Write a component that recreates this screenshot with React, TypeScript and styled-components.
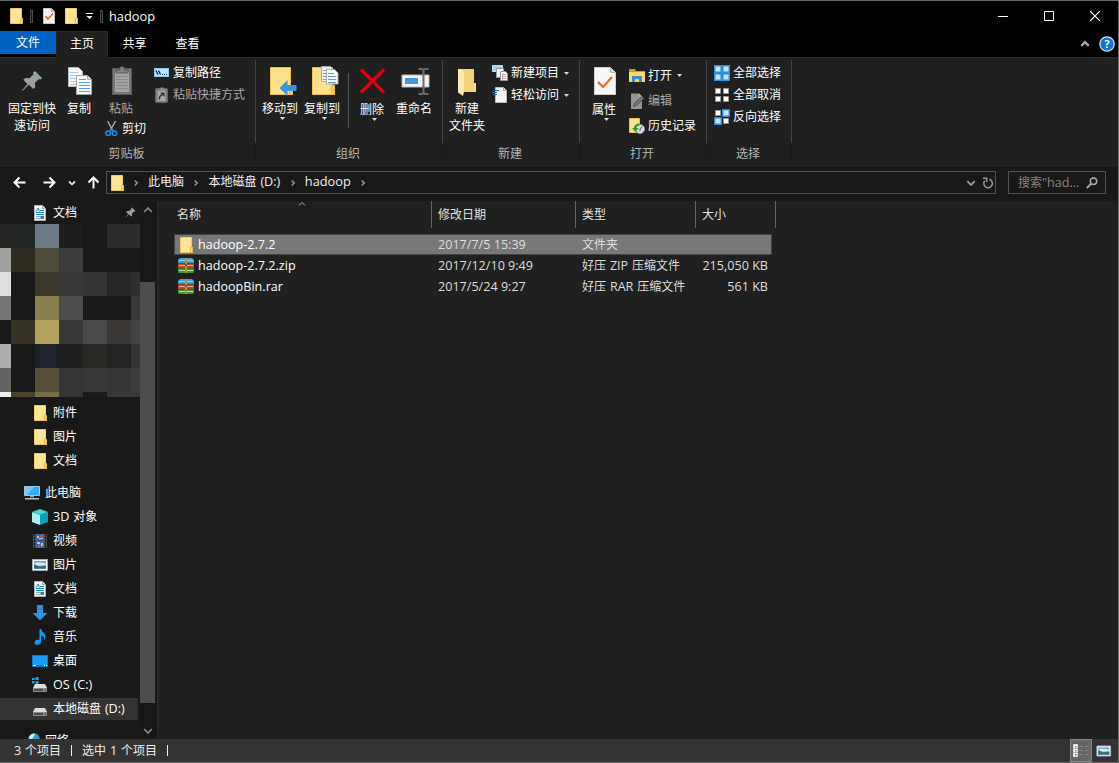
import React from "react";
import styled, { createGlobalStyle } from "styled-components";

const Global = createGlobalStyle`
  * { box-sizing: border-box; }
  body { margin: 0; background: #202020; }
  svg { display: block; flex: none; }
`;

const Window = styled.div`
  width: 1119px;
  height: 763px;
  display: flex;
  flex-direction: column;
  background: #202020;
  border: solid #6b6b6b;
  border-width: 1px 1px 1px 0;
  overflow: hidden;
  color: #fff;
  font-family: "Open Sans", "Noto Sans CJK SC", sans-serif;
  font-size: 12px;
  line-height: 17px;
  white-space: nowrap;
  cursor: default;
`;

const Latin = styled.span<{ $size?: number }>`
  font-size: ${(p) => p.$size ?? 12.6}px;
`;

const MixedText = styled.span<{ $lift?: number }>`
  padding-bottom: ${(p) => (p.$lift ?? 0) * 2}px;
  word-spacing: 0.6px;
  white-space: pre;
`;

/* ---------- title bar ---------- */

const TitleBar = styled.header`
  height: 30px;
  flex: none;
  display: flex;
  align-items: center;
  background: #000;
  padding-left: 8px;
`;

const QuickAccess = styled.div`
  display: flex;
  align-items: center;
  height: 30px;
`;

const QuickItem = styled.div<{ $gap: number }>`
  margin-left: ${(p) => p.$gap}px;
`;

const QuickDivider = styled.div<{ $gap: number }>`
  width: 3px;
  height: 13px;
  margin-left: ${(p) => p.$gap}px;
  border: 1px solid #4a4a4a;
  background: #161616;
`;

const WindowTitle = styled.h1`
  flex: 1;
  margin: 0 0 0 6px;
  font-weight: 400;
  font-size: 12.8px;
  line-height: 30px;
`;

const Caption = styled.div`
  width: 46px;
  height: 30px;
  display: flex;
  align-items: center;
  justify-content: center;
`;

/* ---------- tabs ---------- */

const TabBar = styled.nav`
  height: 27px;
  flex: none;
  display: flex;
  background: #000;
  border-bottom: 1px solid #2b2b2b;
`;

const FileTab = styled.div`
  width: 56px;
  height: 23px;
  line-height: 24px;
  background: #0063c4;
  text-align: center;
`;

const Tab = styled.div<{ $active?: boolean }>`
  width: ${(p) => (p.$active ? 52 : 53)}px;
  height: 27px;
  line-height: 24px;
  text-align: center;
  background: ${(p) => (p.$active ? "#202020" : "transparent")};
  border: solid ${(p) => (p.$active ? "#2b2b2b" : "transparent")};
  border-width: 1px 1px 0 1px;
`;

const TabTools = styled.div`
  margin-left: auto;
  display: flex;
  align-items: center;
  gap: 9px;
  padding-right: 3px;
  height: 26px;
`;

/* ---------- ribbon ---------- */

const Ribbon = styled.section`
  height: 108px;
  flex: none;
  display: flex;
  background: #202020;
  border-bottom: 1px solid #2b2b2b;
`;

const Group = styled.div<{ $width: number }>`
  width: ${(p) => p.$width}px;
  display: flex;
  flex-direction: column;
  background: linear-gradient(#444, #444) right 0 top 2px / 1px 83px no-repeat,
    linear-gradient(#1a1a1a, #1a1a1a) right 0 top 85px / 1px 18px no-repeat;
`;

const GroupBody = styled.div<{ $left?: number }>`
  height: 87px;
  display: flex;
  padding-left: ${(p) => p.$left ?? 0}px;
`;

const GroupName = styled.div`
  color: #b4b4b4;
  text-align: center;
  padding-right: 3px;
`;

const BigButton = styled.div<{ $width: number; $dim?: boolean }>`
  width: ${(p) => p.$width}px;
  display: flex;
  flex-direction: column;
  align-items: center;
  padding-top: 8px;
  text-align: center;
  color: ${(p) => (p.$dim ? "#a9a9a9" : "#fff")};
`;

const BigIcon = styled.div<{ $shift?: number }>`
  height: 34px;
  margin-left: ${(p) => (p.$shift ?? 0) * 2}px;
`;

const BigLabel = styled.div<{ $down?: boolean }>`
  height: 17px;
  margin-top: ${(p) => (p.$down ? 1 : 0)}px;
`;

const BigCaret = styled.div`
  margin-left: 5px;
`;

const Stack = styled.div`
  display: flex;
  flex-direction: column;
`;

const SmallColumn = styled.div<{ $left: number; $top: number; $row: number }>`
  display: grid;
  grid-auto-rows: ${(p) => p.$row}px;
  margin-left: ${(p) => p.$left}px;
  padding-top: ${(p) => p.$top}px;
  align-content: start;
`;

const SmallButton = styled.div<{ $dim?: boolean }>`
  display: flex;
  align-items: center;
  gap: 3px;
  color: ${(p) => (p.$dim ? "#a9a9a9" : "#fff")};
`;

const CutButton = styled(SmallButton)`
  margin: 3px 0 0 11px;
  height: 17px;
  gap: 4px;
`;

const DropMark = styled.div`
  margin-left: 2px;
`;

const InnerDivider = styled.div`
  width: 1px;
  height: 55px;
  margin: 15px 1px 0 5px;
  background: #555;
`;

/* ---------- navigation ---------- */

const NavBar = styled.div`
  height: 35px;
  flex: none;
  display: flex;
  align-items: flex-start;
  background: #191919;
  padding: 5px 12px 0 12px;
`;

const NavArrows = styled.div`
  width: 94px;
  height: 23px;
  display: flex;
  align-items: center;
`;

const NavArrow = styled.div<{ $gap: number }>`
  margin-left: ${(p) => p.$gap}px;
`;

const AddressBox = styled.div`
  width: 890px;
  height: 23px;
  display: flex;
  align-items: center;
  border: 1px solid #535353;
  padding: 0 1px 0 2px;
`;

const Crumb = styled.div`
  line-height: 20px;
  color: #f0f0f0;
  padding-bottom: 2px;
`;

const CrumbMark = styled.div<{ $first?: boolean }>`
  width: ${(p) => (p.$first ? 23 : 24.5)}px;
  padding-right: ${(p) => (p.$first ? 2 : 0)}px;
  display: flex;
  justify-content: center;
`;

const AddressTools = styled.div`
  margin-left: auto;
  display: flex;
  align-items: center;
  gap: 6px;
`;

const SearchBox = styled.div`
  width: 98px;
  height: 23px;
  margin-left: 12px;
  display: flex;
  align-items: center;
  justify-content: space-between;
  border: 1px solid #535353;
  padding: 0 7px 0 9px;
  color: #848484;
`;

/* ---------- body ---------- */

const Body = styled.div`
  flex: 1;
  min-height: 0;
  display: flex;
`;

const Sidebar = styled.aside`
  width: 159px;
  display: flex;
  background: #191919;
  border-right: 2px solid #272727;
  overflow: hidden;
`;

const Tree = styled.div`
  width: 140px;
  flex: none;
`;

const TreeItem = styled.div<{ $indent?: number; $selected?: boolean; $gap?: number; $height?: number }>`
  height: ${(p) => p.$height ?? 24}px;
  width: 138px;
  margin-top: ${(p) => p.$gap ?? 0}px;
  display: flex;
  align-items: center;
  gap: 5px;
  padding-left: ${(p) => p.$indent ?? 32}px;
  background: ${(p) => (p.$selected ? "#333" : "transparent")};
  background-clip: padding-box;
  border: solid transparent;
  border-width: 1px 0 1px 0;
`;

const PinSlot = styled.div`
  margin: 0 2px 0 auto;
`;

const Mosaic = styled.div`
  width: 141px;
  height: 173px;
  margin-bottom: 4px;
  display: grid;
  grid-template-columns: 11px repeat(5, 24px) 10px;
  grid-template-rows: repeat(7, 24px) 5px;
`;

const Tile = styled.div<{ $color: string }>`
  background: ${(p) => p.$color};
`;

const ScrollBar = styled.div`
  width: 15px;
  display: flex;
  flex-direction: column;
  align-items: center;
  padding: 4px 0 3px;
  background: #171717;
`;

const Thumb = styled.div`
  width: 15px;
  height: 421px;
  margin: 67px 0 auto;
  background: #4d4d4d;
`;

const Main = styled.main`
  flex: 1;
  background: #202020;
`;

const ListGrid = styled.div`
  display: grid;
  grid-template-columns: 257px 144px 120px 80px;
`;

const ListHeader = styled(ListGrid)`
  height: 27px;
  margin-left: 16px;
`;

const HeaderCell = styled.div<{ $first?: boolean }>`
  position: relative;
  line-height: 27px;
  padding-left: ${(p) => (p.$first ? 2 : 6)}px;
  color: #e0e0e0;
  border-right: 1px solid #636363;
`;

const SortMark = styled.div`
  position: absolute;
  left: 123px;
  top: -1px;
`;

const Rows = styled.div`
  margin: 6px 0 0 15px;
`;

const Row = styled(ListGrid)<{ $selected?: boolean }>`
  width: 598px;
  height: 21px;
  grid-template-columns: 262px 144px 115px 73px;
  align-items: center;
  background: ${(p) => (p.$selected ? "#777" : "transparent")};
  outline: ${(p) => (p.$selected ? "1px solid #444" : "none")};
  outline-offset: -1px;
  color: #dedede;
`;

const NameCell = styled.div`
  display: flex;
  align-items: center;
  gap: 4px;
  padding-left: 4px;
  color: #fff;
`;

const DataCell = styled.div<{ $shift?: number }>`
  padding-left: ${(p) => p.$shift ?? 2}px;
`;

const SizeCell = styled(DataCell)`
  text-align: right;
`;

const StatusBar = styled.footer`
  height: 23px;
  flex: none;
  display: flex;
  align-items: center;
  background: #333;
  padding-left: 14px;
  color: #ececec;
`;

const StatusDivider = styled.div`
  width: 1px;
  height: 11px;
  margin: 0 10px;
  background: #f0f0f0;
`;

const ViewButtons = styled.div`
  margin-left: auto;
  display: flex;
  align-items: center;
  padding-right: 6px;
  gap: 4px;
`;

const ViewActive = styled.div`
  width: 22px;
  height: 23px;
  background: #666;
  border: 1px solid #838383;
  display: flex;
  align-items: center;
  justify-content: center;
`;

/* ---------- icons ---------- */

const FolderIcon = () => (
  <svg width="16" height="16" viewBox="0 0 16 16">
    <path d="M2.5.5h11v10h1v5h-12z" fill="#ffe495" stroke="#f0ca62" />
    <path d="M12.500 10.500h2v5h-2z" fill="#ffdf80" stroke="#e8b83c" />
  </svg>
);

const CheckPage = ({ big }: { big?: boolean }) =>
  big ? (
    <svg width="22" height="32" viewBox="0 0 22 32">
      <path d="M.5 1.500h16l5 5v22h-21z" fill="#f8f8f8" stroke="#cfcfcf" />
      <path d="M16.500 1.500v5h5" fill="#ddd" stroke="#b5b5b5" />
      <path d="M4 16l5 5 9-10" fill="none" stroke="#f4631e" strokeWidth="2.200" />
    </svg>
  ) : (
    <svg width="12" height="16" viewBox="0 0 12 16">
      <path d="M.5.5h8l3 3v12H.5z" fill="#f6f6f6" stroke="#c4c4c4" />
      <path d="M8.500.5v3h3" fill="#ccc" stroke="#aaa" />
      <path d="M2.500 8l2.500 3 5-5.500" fill="none" stroke="#f4631e" strokeWidth="1.700" />
    </svg>
  );

const Caret = () => (
  <svg width="5" height="3" viewBox="0 0 5 3"><path d="M0 0h5L2.500 3z" fill="#ddd" /></svg>
);

const Chevron = ({ dir, size = 8, color = "#999", weight = 1.5 }: { dir: "up" | "down" | "right"; size?: number; color?: string; weight?: number }) => {
  const d = { up: "M1 5.5L4 2.5 7 5.5", down: "M1 2.5L4 5.5 7 2.5", right: "M2.700 1.500L5.200 4 2.700 6.500" }[dir];
  return (
    <svg width={size} height={size} viewBox="0 0 8 8">
      <path d={d} fill="none" stroke={color} strokeWidth={(weight * 8) / size} />
    </svg>
  );
};

const PinIcon = ({ size = 22 }: { size?: number }) => (
  <svg width={size} height={size} viewBox="0 0 22 22">
    <path d="M14 1l7 7-1.500 1.600-1.600-.5-4 4 .3 4.200-2 1.700-4.300-4.300L1.500 21 1 20.500l5.500-6.500-4.200-4.200 2-1.800 4.200.2 4-4-.5-1.500z" fill="#97a1a8" />
  </svg>
);

const CopyPages = () => (
  <svg width="26" height="32" viewBox="0 0 26 32">
    <path d="M1.500 1.500h10l4 4v15h-14z" fill="#f7f7f7" stroke="#b9b9b9" />
    <path d="M3 6.500h8M3 9.500h10M3 12.500h6M3 15.500h6M3 18.500h6" stroke="#a9c8ea" />
    <path d="M9.500 9.500h11l4 4v15h-15z" fill="#fafafa" stroke="#a9a9a9" />
    <path d="M20.500 9.500v4h4" fill="#ddd" stroke="#aaa" />
    <path d="M12 13.500h7M12 16.500h11M12 19.500h11M12 22.500h11M12 25.500h11" stroke="#5b9bea" />
  </svg>
);

const PasteIcon = () => (
  <svg width="20" height="32" viewBox="0 0 20 32">
    <rect x=".5" y="2.500" width="19" height="26" fill="#777" stroke="#595959" />
    <path d="M3 6h14v20H3z" fill="#a3a3a3" />
    <path d="M4 10.500h12M4 13.500h12M4 16.500h12M4 19.500h12M4 22.500h12" stroke="#898989" />
    <path d="M4 7V4h4V1h4v3h4v3z" fill="#858585" stroke="#5b5b5b" />
  </svg>
);

const CutIcon = () => (
  <svg width="13" height="16" viewBox="0 0 13 16">
    <path d="M2.500 0l5.500 10M10.500 0L5 10" stroke="#a7b0b6" strokeWidth="1.400" />
    <path d="M6.500 8L4.500 10.500M6.500 8l2 2.500" stroke="#178bd3" strokeWidth="1.500" />
    <circle cx="3.200" cy="12.300" r="2.300" fill="none" stroke="#178bd3" strokeWidth="1.500" />
    <circle cx="9.500" cy="12.300" r="2.300" fill="none" stroke="#178bd3" strokeWidth="1.500" />
  </svg>
);

const PathIcon = () => (
  <svg width="16" height="10" viewBox="0 0 16 10">
    <rect x=".5" y=".5" width="14" height="8" fill="#bfe2fb" stroke="#8cc6ef" />
    <path d="M2 2.500l2 4M4.500 2.500l2 4" stroke="#123" strokeWidth="1.300" />
    <path d="M8 6h1v1H8zM10 6h1v1h-1zM12 6h1v1h-1z" fill="#234" />
  </svg>
);

const PasteLinkIcon = () => (
  <svg width="16" height="16" viewBox="0 0 16 16">
    <rect x="1.500" y="1.500" width="12" height="14" rx="1" fill="#7c7c7c" stroke="#636363" />
    <path d="M3.500 4h8v10h-8z" fill="#a8a8a8" />
    <path d="M5 4V2h1.500V.5h3V2H11v2z" fill="#888" />
    <path d="M5.500 12.500V10L8.500 7" fill="none" stroke="#333" strokeWidth="1.500" />
    <path d="M6 5.500h4.500V10z" fill="#333" />
  </svg>
);

const BigFolder = ({ kind }: { kind: "move" | "copy" | "new" }) => {
  if (kind === "new")
    return (
      <svg width="20" height="32" viewBox="0 0 20 32">
        <path d="M2 3h15v14h2v9H4z" fill="#f3d27a" />
        <path d="M17 17h2v9h-2z" fill="#fbdf8f" />
        <path d="M1 3h2l4 2.500V26l-1 4-5-3.500z" fill="#ffecb0" />
      </svg>
    );
  return (
    <svg width="28" height="32" viewBox="0 0 28 32">
      <path d="M1.500 1.500h20v18h2v9h-22z" fill="#ffe08a" stroke="#eec252" />
      <path d="M20.500 19.500h3v9h-3z" fill="#f5cd65" stroke="#ecb93f" />
      {kind === "move" ? (
        <path d="M10.500 22l8-8v5h9v6h-9v5z" fill="#3795e0" />
      ) : (
        <>
          <path d="M10.500.5h9l2 2v13h-11z" fill="#f4f4f4" stroke="#aaa" />
          <path d="M12 4.500h5M12 7.500h3M12 10.500h3M12 13.500h3" stroke="#679fd9" />
          <path d="M15.500 3.500h8l3.500 3.500v11h-11.500z" fill="#fafafa" stroke="#aaa" />
          <path d="M17 7.500h6M17 10.500h8M17 13.500h8M17 16.500h8" stroke="#5b9bea" />
        </>
      )}
    </svg>
  );
};

const DeleteIcon = () => (
  <svg width="26" height="32" viewBox="0 0 26 32">
    <path d="M2 3.500l23 23M25 3.500L2 26.500" stroke="#e60012" strokeWidth="3.200" />
  </svg>
);

const RenameIcon = () => (
  <svg width="29" height="32" viewBox="0 0 29 32">
    <path d="M1 9h27v12H1z" fill="#f5f5f5" stroke="#b7b7b7" />
    <path d="M4 12h13v6H4z" fill="#3d9be5" />
    <path d="M17.500 3h3q2 0 2 2v21M27.500 3h-3q-2 0-2 2M17.500 28h3q2 0 2-2M27.500 28h-3q-2 0-2-2" fill="none" stroke="#6a6a6a" strokeWidth="2" />
  </svg>
);

const NewItemIcon = () => (
  <svg width="16" height="16" viewBox="0 0 16 16">
    <path d="M.5.5h10v6H.5z" fill="#9bd0f3" stroke="#d0dde5" />
    <path d="M4.500 3.500h7v9h-7z" fill="#f3f3f3" stroke="#999" />
    <path d="M8.500 6.500h5l2 2v7h-7z" fill="#fff" stroke="#9a9a9a" />
    <path d="M10 9.500h4M10 11.500h4M10 13.500h4" stroke="#f09c9c" />
    <path d="M10.500 8v7" stroke="#7ea8e0" strokeWidth=".7" />
  </svg>
);

const EasyAccessIcon = () => (
  <svg width="16" height="16" viewBox="0 0 16 16">
    <path d="M3.500.5h8l3 3v12h-11z" fill="#f6f6f6" stroke="#b9b9b9" />
    <path d="M11.500.5v3h3" fill="#ddd" stroke="#aaa" />
    <path d="M2 3.500h5M0 5.500h5M1 7.500h4" stroke="#2b6da8" />
  </svg>
);

const OpenIcon = () => (
  <svg width="16" height="16" viewBox="0 0 16 16">
    <path d="M0 1h6l1 2h9v11H0z" fill="#d39a18" />
    <path d="M0 4h16v10H0z" fill="#ffd767" />
    <path d="M3 14V8h10v6h-3v-3H6v3z" fill="#328fd9" />
  </svg>
);

const EditIcon = () => (
  <svg width="16" height="16" viewBox="0 0 16 16">
    <path d="M2 .5h8l3 3V16H2z" fill="#949494" />
    <path d="M4.500 13.500l1-3.500 7.500-6.500 2 2-7.500 7z" fill="#777" stroke="#4a4a4a" strokeWidth=".8" />
    <path d="M10 .5v3h3" fill="#b5b5b5" />
  </svg>
);

const HistoryIcon = () => (
  <svg width="16" height="16" viewBox="0 0 16 16">
    <path d="M.5.5h10v14H.5z" fill="#ffe08a" stroke="#e5bd52" />
    <circle cx="11" cy="11" r="4.500" fill="#ddd" stroke="#999" />
    <path d="M11 11l2-2.500M11 11v2" stroke="#555" />
    <path d="M10.500 5.500c-3.500 0-5.500 1.500-5.500 4.500H3l3.500 4L9.500 10H7.500c0-1.500 1-2.500 3-2.500z" fill="#25a32b" />
  </svg>
);

const SelectIcon = ({ blue }: { blue: boolean[] }) => (
  <svg width="16" height="16" viewBox="0 0 16 16">
    {blue.map((on, i) => {
      const x = (i % 2) * 8;
      const y = i > 1 ? 8 : 0;
      return on ? (
        <g key={i}>
          <rect x={x} y={y} width="8" height="8" fill="#2a8ede" />
          <rect x={x + 1.5} y={y + 1.5} width="5" height="5" fill="#c2e6fd" />
        </g>
      ) : (
        <rect key={i} x={x + 1.5} y={y + 1.5} width="5" height="5" fill="#fff" stroke="#999" strokeWidth=".8" />
      );
    })}
  </svg>
);

const HelpIcon = () => (
  <svg width="16" height="16" viewBox="0 0 16 16">
    <circle cx="8" cy="8" r="7.200" fill="#0a78d6" stroke="#e5e5e5" strokeWidth="1.200" />
    <text x="8" y="12" fontSize="11" fontWeight="700" textAnchor="middle" fill="#fff" fontFamily="Open Sans">?</text>
  </svg>
);

const ArrowIcon = ({ dir }: { dir: "left" | "right" | "up" }) => (
  <svg width="13" height="13" viewBox="0 0 13 13">
    <path
      transform={`rotate(${{ left: 0, right: 180, up: 90 }[dir]} 6.5 6.5)`}
      d="M12.500 6.500H1.500M6.500 1.500l-5 5 5 5"
      fill="none"
      stroke="#fff"
      strokeWidth="2"
    />
  </svg>
);

const RefreshIcon = () => (
  <svg width="12" height="12" viewBox="0 0 12 12">
    <path d="M2.600 3.800A4.300 4.300 0 1 0 7.500 2.300" fill="none" stroke="#9a9a9a" strokeWidth="1.500" />
    <path d="M1 1.300h3.700V5" fill="none" stroke="#9a9a9a" strokeWidth="1.500" />
  </svg>
);

const SearchIcon = () => (
  <svg width="12" height="12" viewBox="0 0 12 12">
    <circle cx="7.500" cy="4.300" r="3.200" fill="none" stroke="#aaa" strokeWidth="1.500" />
    <path d="M5.200 6.600L.8 11" stroke="#aaa" strokeWidth="1.800" />
  </svg>
);

const DocIcon = () => (
  <svg width="16" height="16" viewBox="0 0 16 16">
    <path d="M2.500.5h8l3 3v12h-11z" fill="#f7f7f7" stroke="#b3b3b3" />
    <path d="M10.500.5v3h3" fill="#ddd" stroke="#aaa" />
    <path d="M4 6.500l2-3.500 1.500 3.500M8 5.500h4M4 7.500h8M4 9.500h8" fill="none" stroke="#1689d8" />
    <path d="M4 11.500h4M4 13.500h4" stroke="#9aa4ac" />
    <path d="M8.500 11h3.500v3H8.500z" fill="#3b7895" />
  </svg>
);

const ComputerIcon = () => (
  <svg width="16" height="16" viewBox="0 0 16 16">
    <path d="M.5 1.500h15v9H.5z" fill="#35aaf6" stroke="#99c9e8" />
    <path d="M1 2h9L3 10H1z" fill="#77c9fc" />
    <path d="M6 11h4v1.500H6z" fill="#829cae" />
    <path d="M1 14h14" stroke="#aebbc4" strokeWidth="2" />
    <path d="M1 14.500h14" stroke="#5f7a90" />
  </svg>
);

const CubeIcon = () => (
  <svg width="16" height="16" viewBox="0 0 16 16">
    <path d="M0 3l8 3v10l-8-3z" fill="#a5eef2" />
    <path d="M8 6l8-3v10l-8 3z" fill="#0f9fba" />
    <path d="M8 0l8 3-8 3-8-3z" fill="#43d4e0" />
  </svg>
);

const VideoIcon = () => (
  <svg width="16" height="16" viewBox="0 0 16 16">
    <path d="M1 1h14v14H1z" fill="#4d4d4d" />
    <path d="M2.500 1v14M13.500 1v14" stroke="#171717" strokeDasharray="2 1" />
    <path d="M4 1h8v6.500H4zM4 8.500h8V15H4z" fill="#3569bd" />
    <path d="M5 3h2v2H5zM9 10h2v3H9z" fill="#efb83b" />
    <path d="M8 2h3v2H8zM6 12h2v2H6z" fill="#cc4f3e" />
    <path d="M7 5h4v1H7zM5 9h3v2H5z" fill="#a9cce9" />
  </svg>
);

const PictureIcon = ({ small }: { small?: boolean }) => (
  <svg width="16" height={small ? 14 : 16} viewBox={small ? "-0.500 1 17.500 14" : "0 0 16 16"}>
    <path d="M.5 2.500h15v11H.5z" fill="#fff" stroke="#b0b0b0" />
    <path d="M2 4h12v8H2z" fill="#69a9e0" />
    <path d="M2 6.500q4-2 12 0v2H2z" fill="#d7eef5" />
    <path d="M2 7l5 2.500 7-1V12H2z" fill="#3b6c61" />
    <path d="M2 11h12v1H2z" fill="#507fa8" />
  </svg>
);

const DownloadIcon = () => (
  <svg width="16" height="16" viewBox="0 0 16 16"><path d="M5 0h6v8h4.500L8 15.500.5 8H5z" fill="#318fdf" /></svg>
);

const MusicIcon = () => (
  <svg width="16" height="16" viewBox="0 0 16 16">
    <path d="M7.500 0h1.700c0 3 4.300 4 4.300 7.500 0 1.700-.8 3-1.500 3.500.5-2.500-.5-4-2.800-4.500v6c0 2-1.700 3.300-3.700 3.300-1.700 0-3-.8-3-2.300 0-2 2.500-3.300 5-2.700z" fill="#169cf4" />
  </svg>
);

const DesktopIcon = () => (
  <svg width="16" height="16" viewBox="0 0 16 16">
    <path d="M0 2h16v12H0z" fill="#1279c7" />
    <path d="M1 3h14v9H1z" fill="#1b9df2" />
    <path d="M1 12.500h3M12 12.500h1M14 12.500h1" stroke="#e8f5ff" />
  </svg>
);

const DriveIcon = ({ os }: { os?: boolean }) => (
  <svg width="16" height="16" viewBox="0 0 16 16">
    <path d="M3 7h10l2 4H1z" fill="#ddd" />
    <path d="M1 11h14v4H1z" fill="#8a8d8f" />
    <path d="M2 12h12v2H2z" fill="#4c4c4c" />
    <path d="M11 12h2v1.500h-2z" fill="#45e04b" />
    {os && <path d="M0 1h2.500v2H0zM3.500 0h3v3h-3zM0 4h2.500v2.500H0zM3.500 4h3v3h-3z" fill="#13a8e8" />}
  </svg>
);

const NetworkIcon = () => (
  <svg width="16" height="16" viewBox="0 0 16 16">
    <circle cx="10" cy="6" r="5.700" fill="#3c9cc7" />
    <path d="M5 4q3-5 6-3l-2 4-3 2z" fill="#c4edf5" />
    <path d="M0 9h10v6H0z" fill="#57b6ec" stroke="#ccc" />
  </svg>
);

const ArchiveIcon = () => (
  <svg width="16" height="16" viewBox="0 0 16 16">
    <path d="M2 0h12l2 2v3H0V2z" fill="#2ea6dd" />
    <path d="M1 2.500h14" stroke="#7fd0f3" />
    <path d="M0 5h16v5H0z" fill="#c2452f" />
    <path d="M1 7.500h14" stroke="#f0a386" />
    <path d="M0 10h16v4l-1 1H1l-1-1z" fill="#3a9a2d" />
    <path d="M1 12.500h14" stroke="#b4e594" />
    <path d="M0 5.300h16M0 10.300h16" stroke="#33251f" strokeWidth=".5" />
    <path d="M7 0h2v15H7z" fill="#c38b2e" />
    <path d="M7 6h2v2H7z" fill="#765423" />
  </svg>
);

const DetailsIcon = () => (
  <svg width="18" height="14" viewBox="0 0 18 14">
    <path d="M1.500.5h4v12h-4z" fill="#fff" stroke="#ddd" />
    <path d="M3 2h1.500v1.500H3z" fill="#6a8c60" />
    <path d="M3 6h1.500v1.500H3z" fill="#3388e8" />
    <path d="M3 10h1.500v1.500H3z" fill="#e11" />
    <path d="M1.500 4.500h4M1.500 8.500h4" stroke="#aaa" />
    <path d="M7 2.500h4M13 2.500h4M7 6.500h4M13 6.500h4M7 10.500h4M13 10.500h4" stroke="#858585" />
  </svg>
);

/* ---------- data ---------- */

const tiles = [
  "#262524 #212524 #6e7a86 #1e1e1e #191919 #2b2c2e #2b2c2e",
  "#a0a0a0 #2e2b21 #4e4b3a #3c3c3c #191919 #191919 #191919",
  "#dedede #191919 #3b382b #3a3836 #343434 #282624 #2e2e2e",
  "#757575 #191919 #8a7e4f #4e4c4a #191919 #191919 #383838",
  "#191919 #363226 #b3a15f #383838 #494949 #3a3735 #434343",
  "#adadad #191919 #1e222b #212121 #282825 #222222 #353535",
  "#636363 #191919 #575039 #353535 #373737 #353535 #3c3c3c",
  "#ededed #4a422b #7a6d45 #353535 #1b1b1b #3a3735 #383838",
].flatMap((line) => line.split(" "));

const devices = [
  { label: "3D 对象", icon: <CubeIcon /> },
  { label: "视频", icon: <VideoIcon /> },
  { label: "图片", icon: <PictureIcon /> },
  { label: "文档", icon: <DocIcon /> },
  { label: "下载", icon: <DownloadIcon /> },
  { label: "音乐", icon: <MusicIcon /> },
  { label: "桌面", icon: <DesktopIcon /> },
  { label: "OS (C:)", icon: <DriveIcon os /> },
  { label: "本地磁盘 (D:)", icon: <DriveIcon />, selected: true },
];

const files = [
  { name: "hadoop-2.7.2", date: "2017/7/5 15:39", type: "文件夹", size: "", icon: <FolderIcon />, selected: true },
  { name: "hadoop-2.7.2.zip", date: "2017/12/10 9:49", type: "好压 ZIP 压缩文件", size: "215,050 KB", icon: <ArchiveIcon /> },
  { name: "hadoopBin.rar", date: "2017/5/24 9:27", type: "好压 RAR 压缩文件", size: "561 KB", icon: <ArchiveIcon /> },
];

/* ---------- parts ---------- */

/* Latin runs inside Chinese labels are set slightly larger than the ideographs. */
const Mixed = ({ text, lift }: { text: string; lift?: number }) => (
  <MixedText $lift={lift}>
    {text.split(/([\x20-\x7e]+)/).filter(Boolean).map((part, i) =>
      /^[\x20-\x7e]/.test(part) ? <Latin key={i}>{part}</Latin> : part
    )}
  </MixedText>
);

type BigProps = { icon: React.ReactNode; label: string; second?: string; width: number; dim?: boolean; drop?: boolean; down?: boolean; shift?: number };

const Big = ({ icon, label, second, width, dim, drop, down, shift }: BigProps) => (
  <BigButton $width={width} $dim={dim}>
    <BigIcon $shift={shift}>{icon}</BigIcon>
    <BigLabel $down={down}>{label}</BigLabel>
    {second && <BigLabel>{second}</BigLabel>}
    {drop && <BigCaret><Caret /></BigCaret>}
  </BigButton>
);

const Small = ({ icon, label, dim, drop, lift = 1 }: { icon: React.ReactNode; label: string; dim?: boolean; drop?: boolean; lift?: number }) => (
  <SmallButton $dim={dim}>
    {icon}
    <Mixed text={label} lift={lift} />
    {drop && <DropMark><Caret /></DropMark>}
  </SmallButton>
);

const PinSpaced = styled.div`
  padding-top: 4px;
`;

export default function App() {
  return (
    <Window>
      <Global />
      <TitleBar>
        <QuickAccess>
          <FolderIcon />
          <QuickDivider $gap={6} />
          <QuickItem $gap={10}><CheckPage /></QuickItem>
          <QuickItem $gap={8}><FolderIcon /></QuickItem>
          <QuickItem $gap={7}>
            <svg width="7" height="6" viewBox="0 0 7 6"><path d="M0 0h7v1H0zM.5 3h6l-3 3z" fill="#fff" /></svg>
          </QuickItem>
          <QuickDivider $gap={7} />
        </QuickAccess>
        <WindowTitle>hadoop</WindowTitle>
        <Caption><svg width="10" height="10"><path d="M0 5.500h10" stroke="#fff" /></svg></Caption>
        <Caption><svg width="10" height="10"><path d="M.5.5h9v9h-9z" fill="none" stroke="#fff" /></svg></Caption>
        <Caption><svg width="10" height="10"><path d="M0 0l10 10M10 0L0 10" stroke="#fff" strokeWidth="1.200" /></svg></Caption>
      </TitleBar>
      <TabBar>
        <FileTab>文件</FileTab>
        <Tab $active>主页</Tab>
        <Tab>共享</Tab>
        <Tab>查看</Tab>
        <TabTools>
          <Chevron dir="up" size={10} color="#aaa" weight={2.2} />
          <HelpIcon />
        </TabTools>
      </TabBar>

      <Ribbon>
        <Group $width={256}>
          <GroupBody>
            <Big width={64} icon={<PinSpaced><PinIcon /></PinSpaced>} label="固定到快" second="速访问" />
            <Big width={30} icon={<CopyPages />} label="复制" shift={1} />
            <Stack>
              <Big width={54} icon={<PasteIcon />} label="粘贴" dim shift={1} />
              <CutButton><CutIcon />剪切</CutButton>
            </Stack>
            <SmallColumn $left={6} $top={4} $row={22}>
              <Small icon={<PathIcon />} label="复制路径" />
              <Small icon={<PasteLinkIcon />} label="粘贴快捷方式" dim />
            </SmallColumn>
          </GroupBody>
          <GroupName>剪贴板</GroupName>
        </Group>

        <Group $width={187}>
          <GroupBody $left={3}>
            <Big width={42} icon={<BigFolder kind="move" />} label="移动到" drop shift={3} />
            <Big width={42} icon={<BigFolder kind="copy" />} label="复制到" drop shift={3} />
            <InnerDivider />
            <Big width={44} icon={<DeleteIcon />} label="删除" drop down />
            <Big width={40} icon={<RenameIcon />} label="重命名" shift={1} />
          </GroupBody>
          <GroupName>组织</GroupName>
        </Group>

        <Group $width={137}>
          <GroupBody>
            <Big width={48} icon={<BigFolder kind="new" />} label="新建" second="文件夹" />
            <SmallColumn $left={1} $top={4} $row={22}>
              <Small icon={<NewItemIcon />} label="新建项目" drop />
              <Small icon={<EasyAccessIcon />} label="轻松访问" drop />
            </SmallColumn>
          </GroupBody>
          <GroupName>新建</GroupName>
        </Group>

        <Group $width={127}>
          <GroupBody>
            <Big width={48} icon={<CheckPage big />} label="属性" drop down shift={1} />
            <SmallColumn $left={1} $top={5} $row={25}>
              <Small icon={<OpenIcon />} label="打开" drop lift={0} />
              <Small icon={<EditIcon />} label="编辑" dim lift={0} />
              <Small icon={<HistoryIcon />} label="历史记录" lift={0} />
            </SmallColumn>
          </GroupBody>
          <GroupName>打开</GroupName>
        </Group>

        <Group $width={85}>
          <GroupBody>
            <SmallColumn $left={7} $top={4} $row={22}>
              <Small icon={<SelectIcon blue={[true, true, true, true]} />} label="全部选择" />
              <Small icon={<SelectIcon blue={[false, false, false, false]} />} label="全部取消" />
              <Small icon={<SelectIcon blue={[false, true, true, false]} />} label="反向选择" />
            </SmallColumn>
          </GroupBody>
          <GroupName>选择</GroupName>
        </Group>
      </Ribbon>

      <NavBar>
        <NavArrows>
          <NavArrow $gap={1}><ArrowIcon dir="left" /></NavArrow>
          <NavArrow $gap={17}><ArrowIcon dir="right" /></NavArrow>
          <NavArrow $gap={12}><Chevron dir="down" color="#ddd" weight={1.8} /></NavArrow>
          <NavArrow $gap={11}><ArrowIcon dir="up" /></NavArrow>
        </NavArrows>
        <AddressBox>
          <FolderIcon />
          <CrumbMark $first><Chevron dir="right" /></CrumbMark>
          <Crumb>此电脑</Crumb>
          <CrumbMark><Chevron dir="right" /></CrumbMark>
          <Crumb><Mixed text="本地磁盘 (D:)" /></Crumb>
          <CrumbMark><Chevron dir="right" /></CrumbMark>
          <Crumb><Latin $size={12.8}>hadoop</Latin></Crumb>
          <CrumbMark><Chevron dir="right" /></CrumbMark>
          <AddressTools>
            <Chevron dir="down" size={10} color="#9a9a9a" weight={1.8} />
            <RefreshIcon />
          </AddressTools>
        </AddressBox>
        <SearchBox><Mixed text={'搜索"had...'} /><SearchIcon /></SearchBox>
      </NavBar>

      <Body>
        <Sidebar>
          <Tree>
            <TreeItem $height={23}>
              <DocIcon />文档<PinSlot><PinIcon size={11} /></PinSlot>
            </TreeItem>
            <Mosaic>{tiles.map((c, i) => <Tile key={i} $color={c} />)}</Mosaic>
            {["附件", "图片", "文档"].map((t) => (
              <TreeItem key={t}><FolderIcon /><Mixed text={t} lift={1} /></TreeItem>
            ))}
            <TreeItem $gap={8} $indent={24}><ComputerIcon /><Mixed text="此电脑" lift={1} /></TreeItem>
            {devices.map((d) => (
              <TreeItem key={d.label} $selected={d.selected}>{d.icon}<Mixed text={d.label} lift={1} /></TreeItem>
            ))}
            <TreeItem $gap={8} $indent={24}><NetworkIcon /><Mixed text="网络" lift={1} /></TreeItem>
          </Tree>
          <ScrollBar>
            <Chevron dir="up" size={10} color="#7d7d7d" weight={1.8} />
            <Thumb />
            <Chevron dir="down" size={10} color="#7d7d7d" weight={1.8} />
          </ScrollBar>
        </Sidebar>
        <Main>
          <ListHeader>
            <HeaderCell $first>名称<SortMark><Chevron dir="up" color="#aaa" weight={1} /></SortMark></HeaderCell>
            <HeaderCell>修改日期</HeaderCell>
            <HeaderCell>类型</HeaderCell>
            <HeaderCell>大小</HeaderCell>
          </ListHeader>
          <Rows>
            {files.map((f) => (
              <Row key={f.name} $selected={f.selected}>
                <NameCell>{f.icon}<Latin>{f.name}</Latin></NameCell>
                <DataCell><Latin>{f.date}</Latin></DataCell>
                <DataCell><Mixed text={f.type} /></DataCell>
                <SizeCell $shift={0}><Latin>{f.size}</Latin></SizeCell>
              </Row>
            ))}
          </Rows>
        </Main>
      </Body>

      <StatusBar>
        <Mixed text="3 个项目" />
        <StatusDivider />
        <Mixed text="选中 1 个项目" />
        <StatusDivider />
        <ViewButtons>
          <ViewActive><DetailsIcon /></ViewActive>
          <PictureIcon small />
        </ViewButtons>
      </StatusBar>
    </Window>
  );
}
